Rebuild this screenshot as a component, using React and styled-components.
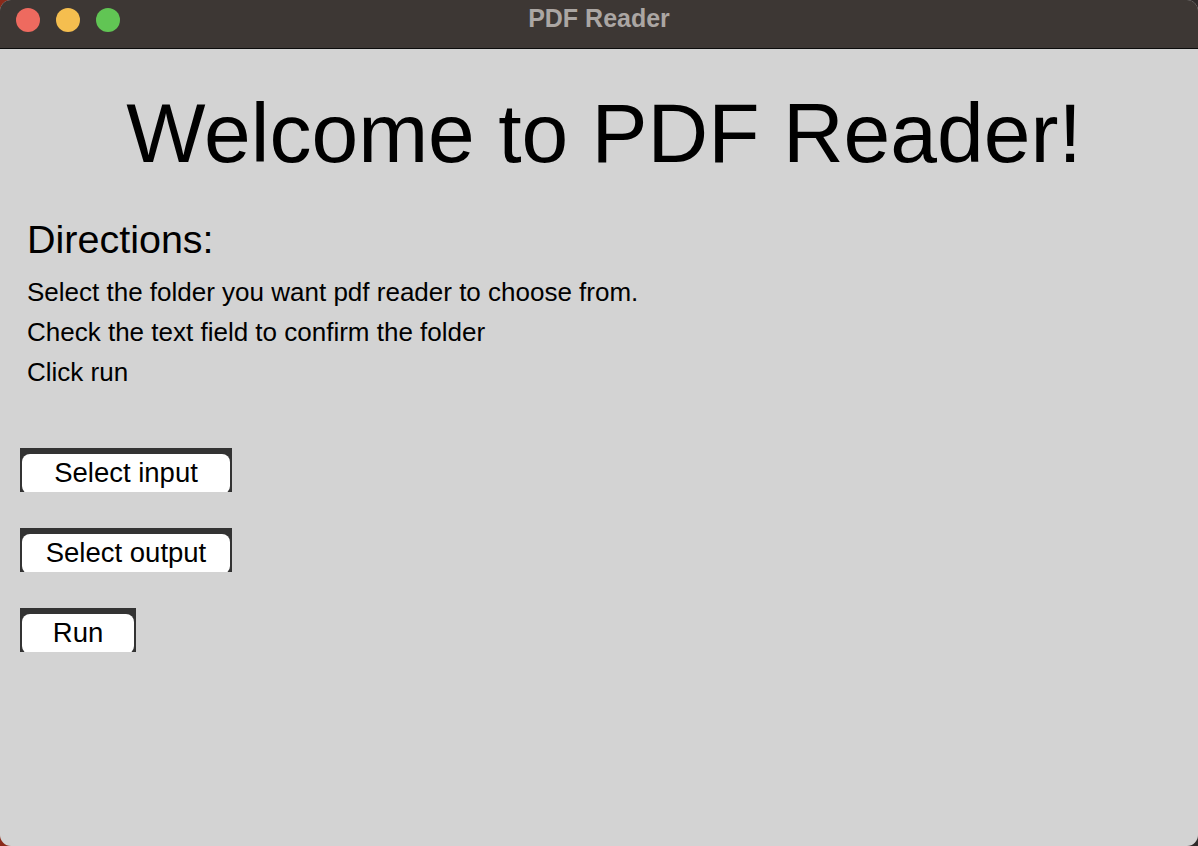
import React from "react";
import styled, { createGlobalStyle } from "styled-components";

const Global = createGlobalStyle`
  html, body {
    margin: 0;
    padding: 0;
    width: 1198px;
    height: 846px;
    overflow: hidden;
    background: linear-gradient(90deg, #8a2a1a 0%, #6b2a20 50%, #2e2a2a 100%);
  }
  * { box-sizing: border-box; }
`;

const Window = styled.div`
  width: 1198px;
  height: 846px;
  border-radius: 11px;
  overflow: hidden;
  display: flex;
  flex-direction: column;
  background: #d3d3d3;
  font-family: "Liberation Sans", Arial, sans-serif;
`;

const TitleBar = styled.div`
  position: relative;
  height: 49px;
  flex: none;
  background: #3d3734;
  border-bottom: 1px solid #0c0c0c;
  display: flex;
  align-items: center;
  justify-content: center;
`;

const Lights = styled.div`
  position: absolute;
  left: 16px;
  top: 8px;
  display: flex;
  gap: 16px;
`;

const Light = styled.span`
  width: 24px;
  height: 24px;
  border-radius: 50%;
  background: ${(p) => p.$color};
`;

const Title = styled.div`
  margin-top: -11px;
  font-size: 25px;
  font-weight: 700;
  color: #aba6a3;
`;

const Main = styled.main`
  flex: 1;
  display: flex;
  flex-direction: column;
  padding: 0 20px;
`;

const Heading = styled.h1`
  margin: 42px 0 0 0;
  padding-left: 10px;
  font-size: 84px;
  font-weight: 400;
  line-height: 1;
  text-align: center;
  color: #000;
`;

const Subheading = styled.h2`
  margin: 45px 0 12px 7px;
  font-size: 39.5px;
  font-weight: 400;
  line-height: 1;
  color: #000;
`;

const Step = styled.p`
  margin: 0 0 0 7px;
  font-size: 26px;
  line-height: 40px;
  color: #000;
`;

const ButtonList = styled.div`
  margin-top: 56px;
  display: flex;
  flex-direction: column;
  align-items: flex-start;
  gap: 36px;
`;

const ButtonFrame = styled.div`
  width: ${(p) => p.$width}px;
  height: 44px;
  background: #333333;
  padding: 6px 2px 0 2px;
  overflow: hidden;
`;

const Button = styled.button`
  width: 100%;
  height: 40px;
  border: none;
  border-radius: 8px;
  background: #ffffff;
  font-family: "Liberation Sans", Arial, sans-serif;
  font-size: 27.5px;
  color: #000;
  padding: 0;
  display: flex;
  align-items: flex-start;
  justify-content: center;
  line-height: 38px;
`;

export default function App() {
  return (
    <>
      <Global />
      <Window>
        <TitleBar>
          <Lights>
            <Light $color="#ee6a5f" />
            <Light $color="#f5be4f" />
            <Light $color="#61c554" />
          </Lights>
          <Title>PDF Reader</Title>
        </TitleBar>
        <Main>
          <Heading>Welcome to PDF Reader!</Heading>
          <Subheading>Directions:</Subheading>
          <Step>Select the folder you want pdf reader to choose from.</Step>
          <Step>Check the text field to confirm the folder</Step>
          <Step>Click run</Step>
          <ButtonList>
            <ButtonFrame $width={212}>
              <Button>Select input</Button>
            </ButtonFrame>
            <ButtonFrame $width={212}>
              <Button>Select output</Button>
            </ButtonFrame>
            <ButtonFrame $width={116}>
              <Button>Run</Button>
            </ButtonFrame>
          </ButtonList>
        </Main>
      </Window>
    </>
  );
}
